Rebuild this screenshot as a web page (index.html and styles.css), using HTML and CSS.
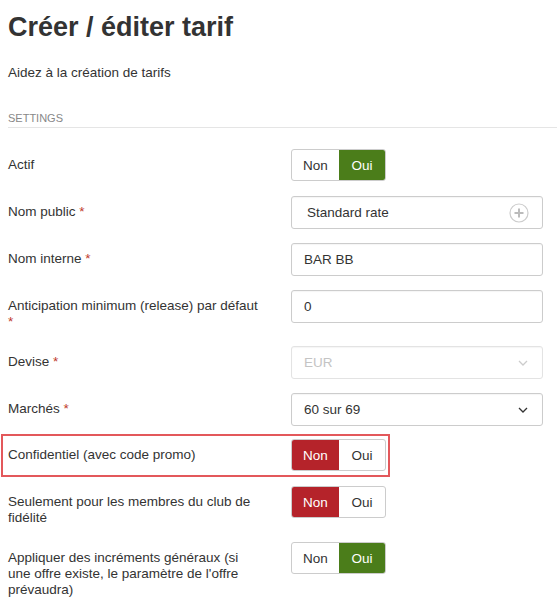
FILE: index.html
```html
<!DOCTYPE html>
<html lang="fr">
<head>
  <meta charset="UTF-8">
  <meta name="viewport" content="width=device-width, initial-scale=1.0">
  <title>Créer / éditer tarif</title>
<link rel="stylesheet" href="styles.css">
</head>
<body>
  <header>
    <h1>Créer / éditer tarif</h1>
    <p class="subtitle">Aidez à la création de tarifs</p>
  </header>

  <section class="settings">
    <h2>Settings</h2>

    <!-- Actif -->
    <div class="row">
      <label class="row-label">Actif</label>
      <div class="toggle">
        <span class="opt">Non</span>
        <span class="opt on-yes">Oui</span>
      </div>
    </div>

    <div class="row">
      <label class="row-label">Nom public <span class="req">*</span></label>
      <div class="field field-public">
        <span>Standard rate</span>
        <svg class="plus" width="20" height="20" viewBox="0 0 20 20">
          <circle cx="10" cy="10" r="9" fill="none" stroke="#ccc" stroke-width="1.2"/>
          <path d="M10 5.5v9M5.5 10h9" stroke="#bbb" stroke-width="2"/>
        </svg>
      </div>
    </div>

    <div class="row">
      <label class="row-label">Nom interne <span class="req">*</span></label>
      <div class="field">BAR BB</div>
    </div>

    <div class="row">
      <label class="row-label">Anticipation minimum (release) par défaut <span class="req">*</span></label>
      <div class="field">0</div>
    </div>

    <div class="row">
      <label class="row-label">Devise <span class="req">*</span></label>
      <div class="field field-select disabled">
        <span>EUR</span>
        <svg width="10" height="6" viewBox="0 0 10 6"><path d="M1 1l4 4 4-4" fill="none" stroke="#ccc" stroke-width="1.3"/></svg>
      </div>
    </div>

    <div class="row">
      <label class="row-label">Marchés <span class="req">*</span></label>
      <div class="field field-select">
        <span>60 sur 69</span>
        <svg width="10" height="6" viewBox="0 0 10 6"><path d="M1 1l4 4 4-4" fill="none" stroke="#333" stroke-width="1.3"/></svg>
      </div>
    </div>

    <!-- highlighted row -->
    <div class="row highlight">
      <label class="row-label">Confidentiel (avec code promo)</label>
      <div class="toggle">
        <span class="opt on-no">Non</span>
        <span class="opt">Oui</span>
      </div>
    </div>

    <div class="row">
      <label class="row-label">Seulement pour les membres du club de fidélité</label>
      <div class="toggle">
        <span class="opt on-no">Non</span>
        <span class="opt">Oui</span>
      </div>
    </div>

    <div class="row">
      <label class="row-label">Appliquer des incréments généraux (si une offre existe, le paramètre de l'offre prévaudra)</label>
      <div class="toggle">
        <span class="opt">Non</span>
        <span class="opt on-yes">Oui</span>
      </div>
    </div>
  </section>
</body>
</html>
```

FILE: styles.css
```css
/* General */
body {
  font-family: 'Liberation Sans', Arial, sans-serif;
  font-size: 13.5px;
  margin: 0;
  padding: 0 0 0 8px;
  color: #333;
  background-color: #fff;
}

/* Header */
header h1 {
  font-size: 27px;
  font-weight: bold;
  margin: 0;
  padding-top: 11px;
  line-height: 32px;
}

.subtitle {
  margin: 22px 0 0;
  line-height: 16px;
}

/* Settings section */
.settings h2 {
  font-size: 11px;
  font-weight: normal;
  text-transform: uppercase;
  color: #888;
  margin: 30px 0 0;
  padding-bottom: 2px;
  border-bottom: 1px solid #e5e5e5;
  line-height: 14px;
}

.row {
  display: grid;
  grid-template-columns: 283px 252px;
  align-items: start;
  margin-top: 14px;
  min-height: 33px;
}

.settings h2 + .row {
  margin-top: 21px;
}

.row-label {
  padding: 8px 28px 2px 0;
  line-height: 16px;
}

.req {
  color: #c0392b;
}

/* Inputs */
.field {
  height: 31px;
  border: 1px solid #ccc;
  border-radius: 3px;
  box-shadow: inset 0 1px 1px rgba(0, 0, 0, 0.04);
  padding: 0 12px;
  display: flex;
  align-items: center;
  justify-content: space-between;
}

.field-public {
  padding-left: 15px;
  padding-right: 13px;
}

.field-select svg {
  margin-right: 2px;
}

.field.disabled {
  color: #c4c4c4;
  border-color: #e3e3e3;
}

/* Toggle buttons */
.toggle {
  display: flex;
  width: max-content;
  border: 1px solid #ccc;
  border-radius: 3px;
  overflow: hidden;
  height: 30px;
}

.opt {
  display: flex;
  align-items: center;
  justify-content: center;
  width: 46px;
}

.opt:first-child {
  width: 47px;
}

.on-yes {
  background-color: #4b7d1a;
  color: #fff;
}

.on-no {
  background-color: #b5232a;
  color: #fff;
}

/* Highlighted row */
.row.highlight {
  margin-left: -7px;
  padding: 3px 3px 3px 5px;
  border: 2px solid #e3585b;
  width: 377px;
  grid-template-columns: 283px 94px;
  margin-top: 8px;
  margin-bottom: -5px;
}
```
